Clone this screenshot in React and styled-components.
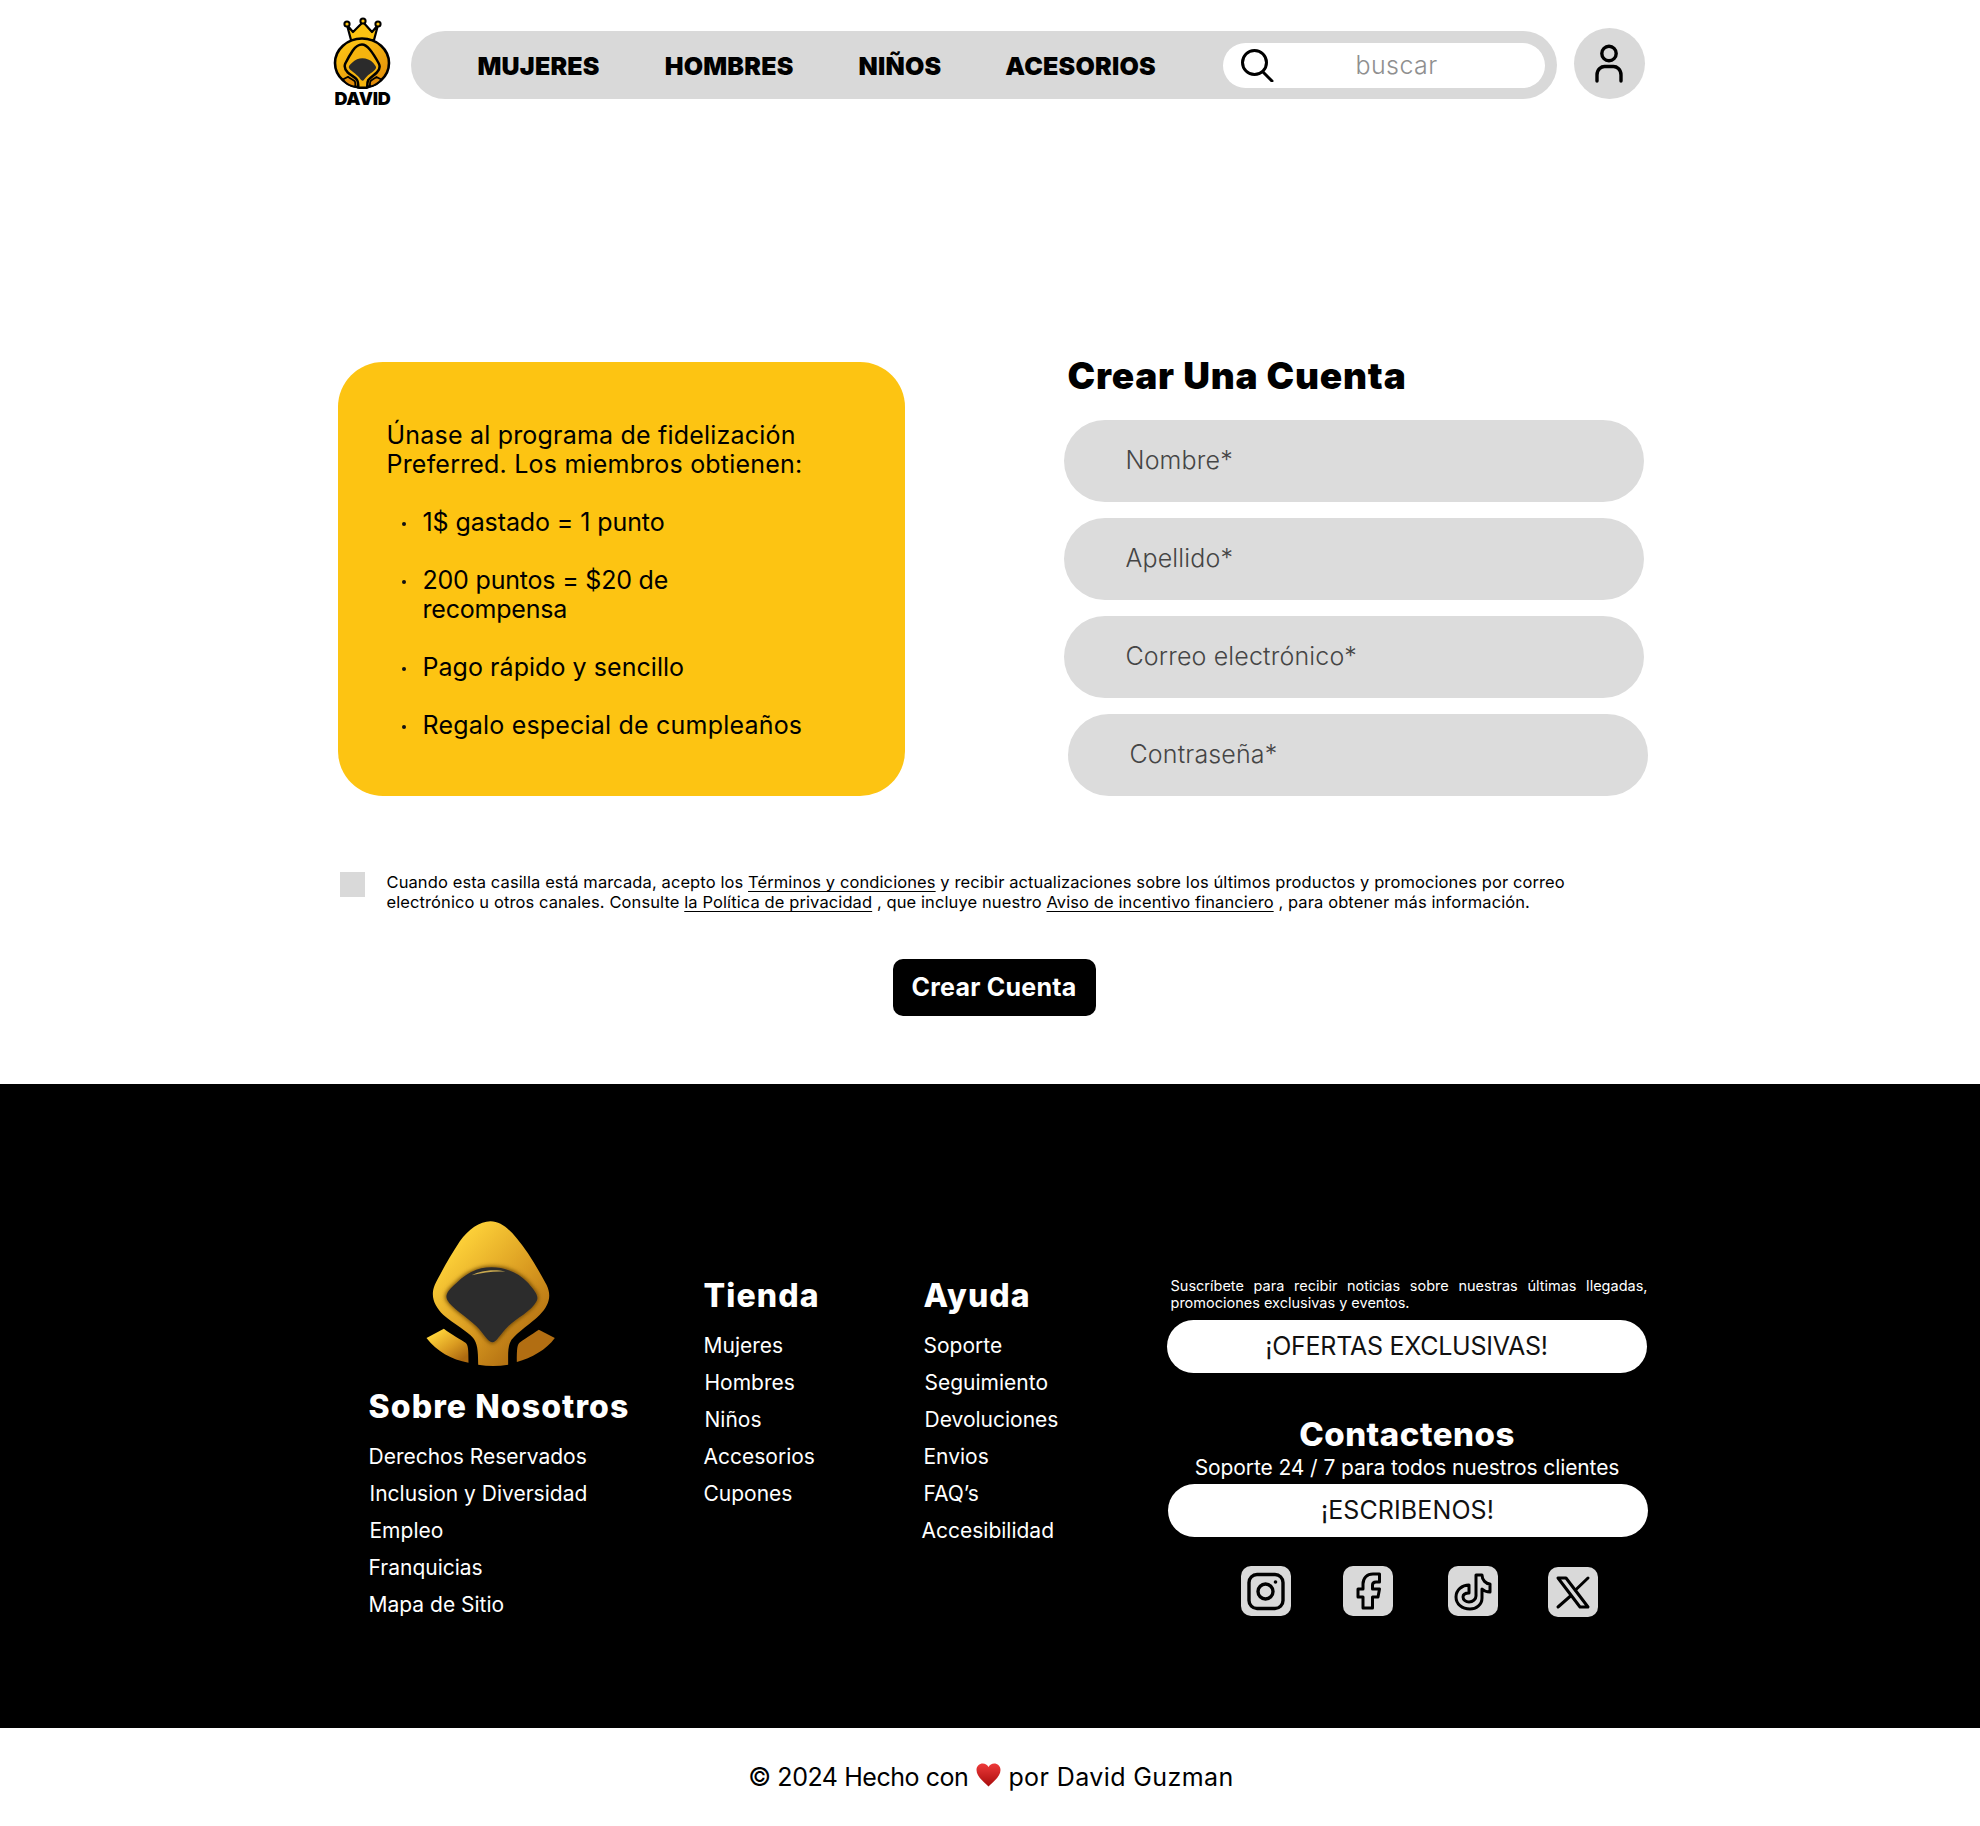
import React from "react";
import styled, { createGlobalStyle } from "styled-components";

const Global = createGlobalStyle`
  html, body { margin: 0; padding: 0; background: #fff; }
  body { font-family: Inter, "Open Sans", sans-serif; color: #000; }
  * { box-sizing: border-box; }
`;
const Shell = styled.div`
  width: 1315px;
  margin: 0 auto;
`;
const Header = styled.header`
  display: flex;
  align-items: flex-start;
  height: 355px;
  padding-top: 17px;
`;
const Brand = styled.div`
  display: flex;
  flex-direction: column;
  align-items: center;
  width: 58px;
  margin-right: 20px;
`;
const BrandName = styled.span`
  font-size: 18px;
  line-height: 17px;
  font-weight: 900;
  letter-spacing: -0.3px;
  margin: 1px 0 0 2px;
`;
const NavPill = styled.nav`
  display: flex;
  align-items: center;
  width: 1146px;
  height: 68px;
  margin-top: 14px;
  padding: 0 12px 0 67px;
  background: #d9d9d9;
  border-radius: 34px;
`;
const NavLink = styled.a`
  font-size: 25px;
  line-height: 68px;
  font-weight: 900;
  letter-spacing: 0.2px;
  margin-right: ${(p) => p.$gap}px;
  padding-top: 2px;
`;
const SearchBox = styled.div`
  display: flex;
  align-items: center;
  width: 322px;
  height: 45px;
  margin-left: auto;
  padding-left: 17px;
  background: #fff;
  border-radius: 23px;
  svg { flex: none; }
`;
const SearchInput = styled.input`
  width: 160px;
  margin-left: 82px;
  border: 0;
  outline: 0;
  padding: 0;
  background: transparent;
  font: 300 25px Inter, sans-serif;
  letter-spacing: 0.4px;
  &::placeholder { color: #8f8f8f; opacity: 1; }
`;
const UserButton = styled.button`
  display: flex;
  align-items: center;
  justify-content: center;
  width: 71px;
  height: 71px;
  margin: 11px 0 0 17px;
  padding: 0;
  border: 0;
  border-radius: 50%;
  background: #d9d9d9;
`;
const Row = styled.section`
  display: flex;
  align-items: flex-start;
  padding-left: 5px;
`;
const Card = styled.aside`
  width: 567px;
  height: 434px;
  margin-top: 7px;
  padding: 59px 40px 0 49px;
  background: #fdc412;
  border-radius: 45px;
  font-size: 25px;
  line-height: 29px;
  font-weight: 400;
`;
const CardLead = styled.p`
  margin: 0 0 29px;
  letter-spacing: 0.2px;
`;
const Perks = styled.ul`
  margin: 0;
  padding: 0;
  list-style: none;
`;
const Perk = styled.li`
  position: relative;
  margin: 0 0 29px;
  padding-left: 36px;
  white-space: pre;
  letter-spacing: ${(p) => p.$track || "0"};
  &::before {
    content: "";
    position: absolute;
    left: 15px;
    top: 14px;
    width: 4px;
    height: 4px;
    border-radius: 50%;
    background: #111;
  }
`;
const FormCol = styled.div`
  display: flex;
  flex-direction: column;
  width: 584px;
  margin-left: 159px;
`;
const FormTitle = styled.h1`
  margin: 0 0 23px 4px;
  font-size: 37px;
  line-height: 42px;
  font-weight: 900;
  letter-spacing: 0.8px;
`;
const Field = styled.input`
  width: 580px;
  height: 82px;
  margin: 0 0 16px ${(p) => p.$shift || 0}px;
  padding: 0 0 2px 62px;
  border: 0;
  outline: 0;
  border-radius: 41px;
  background: #dcdcdc;
  font: 300 25px Inter, sans-serif;
  letter-spacing: 0.15px;
  &::placeholder { color: #454545; opacity: 1; }
`;
const Consent = styled.div`
  display: flex;
  align-items: flex-start;
  margin-top: 60px;
  padding-left: 7px;
`;
const Check = styled.span`
  flex: none;
  width: 25px;
  height: 25px;
  margin-right: 22px;
  background: #d9d9d9;
`;
const ConsentText = styled.p`
  margin: 0;
  font-size: 16.5px;
  line-height: 20px;
  letter-spacing: 0.1px;
  a { text-decoration: underline; text-underline-offset: 3px; text-decoration-thickness: 1px; }
`;
const Submit = styled.button`
  display: block;
  width: 203px;
  height: 57px;
  margin: 47px 0 68px 560px;
  padding: 0 0 2px;
  border: 0;
  border-radius: 10px;
  background: #000;
  color: #fff;
  font: 700 25px Inter, sans-serif;
  letter-spacing: 0.25px;
`;
const Footer = styled.footer`
  height: 644px;
  background: #000;
  color: #fff;
  padding-top: 134px;
`;
const FooterGrid = styled.div`
  display: grid;
  grid-template-columns: 371px 220px 243px 481px;
`;
const About = styled.div`
  padding-left: 36px;
`;
const LinkCol = styled.div`
  padding-top: 56px;
`;
const FooterLogo = styled.svg`
  display: block;
  width: 137px;
  height: 150px;
  margin: 0 0 17px 54px;
`;
const FooterTitle = styled.h3`
  margin: 0 0 9px;
  font-size: 32px;
  line-height: 44px;
  font-weight: 800;
  letter-spacing: 1.1px;
`;
const FooterLink = styled.a`
  display: block;
  margin-left: ${(p) => p.$nudge || 0}px;
  font-size: 21px;
  line-height: 37px;
  font-weight: 400;
`;
const Side = styled.div`
  padding-top: 59px;
`;
const Blurb = styled.p`
  width: 477px;
  margin: 0 0 9px 4px;
  font-size: 14.5px;
  line-height: 17px;
  text-align: justify;
`;
const Pill = styled.a`
  display: block;
  width: 480px;
  height: 53px;
  margin-left: ${(p) => p.$shift || 0}px;
  border-radius: 27px;
  background: #fff;
  color: #111;
  font-size: 25px;
  line-height: 53px;
  font-weight: 400;
  letter-spacing: ${(p) => p.$track || "0"};
  text-align: center;
`;
const ContactTitle = styled.h3`
  margin: 40px 0 0;
  font-size: 33px;
  line-height: 42px;
  font-weight: 800;
  letter-spacing: 0.5px;
  text-align: center;
`;
const ContactText = styled.p`
  margin: 0 0 4px;
  font-size: 21px;
  line-height: 25px;
  letter-spacing: -0.1px;
  text-align: center;
`;
const Socials = styled.div`
  display: flex;
  align-items: flex-start;
  margin: 29px 0 0 74px;
`;
const Tile = styled.a`
  display: block;
  width: 50px;
  height: 50px;
  margin-left: ${(p) => p.$gap || 0}px;
  margin-top: ${(p) => p.$drop || 0}px;
  border-radius: 10px;
  background: #d9d9d9;
  svg { display: block; }
`;
const Bottom = styled.div`
  display: flex;
  align-items: center;
  justify-content: center;
  height: 98px;
  padding-left: 2px;
  font-size: 25px;
  font-weight: 400;
  svg { margin: -4px 7px 0 8px; }
`;
const BottomText = styled.span`
  letter-spacing: ${(p) => p.$track};
`;

const HOOD = "M452 65C420 65 385 90 360 125C330 170 300 225 285 255C270 290 285 320 310 345C340 372 385 395 400 415C412 430 415 450 415 495C445 500 475 500 505 495C505 460 503 440 515 420C535 395 575 370 600 345C630 315 635 285 620 255C590 200 560 150 530 115C505 85 480 65 452 65Z";
const FACE = "M455 203C420 203 385 215 350 250C325 272 315 285 322 300C335 325 380 350 410 380C430 400 445 428 457 428C470 428 480 405 505 380C530 355 575 335 590 305C597 290 590 280 565 250C535 218 495 203 455 203Z";
const SHOULDER_L = "M260 415L312 387C335 405 365 420 378 430C385 437 386 450 386 489C335 480 290 455 260 415Z";
const SHOULDER_R = "M645 415L597 390C575 405 550 420 538 430C532 437 531 450 531 487C575 475 620 450 645 415Z";

const BrandMark = () => (
  <svg width="58" height="72" viewBox="0 0 58 72">
    <defs>
      <linearGradient id="brandGold" x1="0.15" y1="0" x2="0.85" y2="1">
        <stop offset="0" stopColor="#ffc916" />
        <stop offset="1" stopColor="#e08a08" />
      </linearGradient>
    </defs>
    <path d="M14 8L20 15L30 5L39 15L45 8L41 23H18Z" fill="#fdc412" stroke="#000" strokeWidth="2.2" strokeLinejoin="round" />
    <circle cx="14" cy="7" r="2.6" fill="#fdc412" stroke="#000" strokeWidth="2" />
    <circle cx="30" cy="4" r="2.6" fill="#fdc412" stroke="#000" strokeWidth="2" />
    <circle cx="45" cy="7" r="2.6" fill="#fdc412" stroke="#000" strokeWidth="2" />
    <ellipse cx="29" cy="46" rx="27" ry="24.5" fill="url(#brandGold)" stroke="#000" strokeWidth="2.6" />
    <g transform="translate(-16.2 21) scale(0.1)">
      <path d={HOOD} fill="#f6b40e" stroke="#000" strokeWidth="25" />
      <path d={FACE} fill="#2b2b2b" />
      <path d={SHOULDER_L} fill="#e08a08" stroke="#000" strokeWidth="18" />
      <path d={SHOULDER_R} fill="#e08a08" stroke="#000" strokeWidth="18" />
    </g>
  </svg>
);

const FooterMark = () => (
  <FooterLogo viewBox="250 55 410 450">
    <defs>
      <linearGradient id="hoodGold" x1="0.2" y1="0.15" x2="0.85" y2="0.9">
        <stop offset="0" stopColor="#fdd139" />
        <stop offset="0.55" stopColor="#d99a20" />
        <stop offset="1" stopColor="#ad6a10" />
      </linearGradient>
      <filter id="soft" x="-20%" y="-20%" width="140%" height="140%">
        <feGaussianBlur stdDeviation="7" />
      </filter>
    </defs>
    <path d={HOOD} fill="url(#hoodGold)" />
    <path d={FACE} fill="#6b4508" filter="url(#soft)" stroke="#6b4508" strokeWidth="6" />
    <path d={FACE} fill="#2c2c2c" />
    <path d="M395 227C425 212 465 208 497 216C465 214 430 218 395 227Z" fill="#c9a94f" />
    <path d={SHOULDER_L} fill="url(#hoodGold)" />
    <path d={SHOULDER_R} fill="#b26e12" />
  </FooterLogo>
);

const SearchIcon = () => (
  <svg width="34" height="34" viewBox="0 0 34 34" fill="none" stroke="#000" strokeWidth="3" strokeLinecap="round">
    <circle cx="14.5" cy="14.5" r="12" />
    <path d="M23 24L32 33" />
  </svg>
);
const UserIcon = () => (
  <svg width="32" height="40" viewBox="0 0 32 40" fill="none" stroke="#000" strokeWidth="3.4" strokeLinecap="round">
    <circle cx="16" cy="9.5" r="7.2" />
    <path d="M4 37V31C4 25 8.5 22.5 11.5 22.5H20.5C23.5 22.5 28 25 28 31V37" />
  </svg>
);
const Heart = () => (
  <svg width="25" height="24" viewBox="0 0 25 24">
    <defs>
      <linearGradient id="heartRed" x1="0" y1="0" x2="0" y2="1">
        <stop offset="0" stopColor="#ee3a3a" />
        <stop offset="1" stopColor="#a80c0c" />
      </linearGradient>
    </defs>
    <path d="M12.5 23.5C8 19 0.5 13.5 0.5 7C0.5 3 3.5 0.5 6.8 0.5C9.2 0.5 11.3 1.8 12.5 4C13.7 1.8 15.8 0.5 18.2 0.5C21.5 0.5 24.5 3 24.5 7C24.5 13.5 17 19 12.5 23.5Z" fill="url(#heartRed)" />
  </svg>
);
const tileStroke = { fill: "none", stroke: "#000", strokeWidth: 3, strokeLinejoin: "round", strokeLinecap: "round" };
const InstagramIcon = () => (
  <svg width="50" height="50" viewBox="0 0 50 50" {...tileStroke}>
    <rect x="8" y="8.5" width="34" height="34" rx="8" strokeWidth="3.4" />
    <circle cx="24.5" cy="25.5" r="7.5" strokeWidth="3.4" />
    <circle cx="34.5" cy="16" r="1.8" fill="#000" stroke="none" />
  </svg>
);
const FacebookIcon = () => (
  <svg width="50" height="50" viewBox="0 0 50 50" {...tileStroke}>
    <path d="M36.5 8L30 8C24 8 20 12 20 18L20 23L15 23L15 31L20 31L20 42L29.5 42L29.5 31L35 31L36.5 23L29.5 23L29.5 19C29.5 17 31 16 33 16L36.5 16Z" />
  </svg>
);
const TiktokIcon = () => (
  <svg width="50" height="50" viewBox="0 0 50 50" {...tileStroke}>
    <path d="M28 9L34 9C34 14 38 18 42 18L42 26C38 26 36 25 34 23L34 32C34 39 28 43 22 43C14 43 8 38 8 31C8 24 14 19 21 19L21 27C17 27 15 28 15 31C15 34 18 36 21 36C25 36 28 33 28 30Z" />
  </svg>
);
const XIcon = () => (
  <svg width="50" height="50" viewBox="0 0 50 50" {...tileStroke}>
    <path d="M10 11L18 11L40 40L32 40Z" />
    <path d="M40 11L27.5 23M22.5 29L10 40" />
  </svg>
);

const TIENDA = [["Mujeres", 0], ["Hombres", 1], ["Niños", 1], ["Accesorios", 0], ["Cupones", 0]];
const AYUDA = [["Soporte", 0], ["Seguimiento", 1], ["Devoluciones", 1], ["Envios", 0], ["FAQ’s", 0], ["Accesibilidad", -2]];
const SOBRE = [["Derechos Reservados", 0], ["Inclusion y Diversidad", 1], ["Empleo", 1], ["Franquicias", 0], ["Mapa de Sitio", 0]];

export default function App() {
  return (
    <>
      <Global />
      <Shell>
        <Header>
          <Brand>
            <BrandMark />
            <BrandName>DAVID</BrandName>
          </Brand>
          <NavPill>
            <NavLink $gap={65}>MUJERES</NavLink>
            <NavLink $gap={65}>HOMBRES</NavLink>
            <NavLink $gap={64}>NIÑOS</NavLink>
            <NavLink>ACESORIOS</NavLink>
            <SearchBox>
              <SearchIcon />
              <SearchInput placeholder="buscar" />
            </SearchBox>
          </NavPill>
          <UserButton aria-label="cuenta"><UserIcon /></UserButton>
        </Header>
        <Row>
          <Card>
            <CardLead>Únase al programa de fidelización<br />Preferred. Los miembros obtienen:</CardLead>
            <Perks>
              <Perk $track="-0.1px">1$ gastado = 1 punto</Perk>
              <Perk $track="-0.2px">{"200 puntos = $20 de\nrecompensa"}</Perk>
              <Perk $track="0.05px">Pago rápido y sencillo</Perk>
              <Perk $track="0.2px">Regalo especial de cumpleaños</Perk>
            </Perks>
          </Card>
          <FormCol>
            <FormTitle>Crear Una Cuenta</FormTitle>
            <Field placeholder="Nombre*" />
            <Field placeholder="Apellido*" />
            <Field placeholder="Correo electrónico*" />
            <Field $shift={4} placeholder="Contraseña*" />
          </FormCol>
        </Row>
        <Consent>
          <Check />
          <ConsentText>
            Cuando esta casilla está marcada, acepto los <a>Términos y condiciones</a> y recibir actualizaciones sobre los últimos productos y promociones por correo<br />
            electrónico u otros canales. Consulte <a>la Política de privacidad</a> , que incluye nuestro <a>Aviso de incentivo financiero</a> , para obtener más información.
          </ConsentText>
        </Consent>
        <Submit>Crear Cuenta</Submit>
      </Shell>
      <Footer>
        <Shell>
          <FooterGrid>
            <About>
              <FooterMark />
              <FooterTitle>Sobre Nosotros</FooterTitle>
              {SOBRE.map(([t, n]) => <FooterLink key={t} $nudge={n}>{t}</FooterLink>)}
            </About>
            <LinkCol>
              <FooterTitle>Tienda</FooterTitle>
              {TIENDA.map(([t, n]) => <FooterLink key={t} $nudge={n}>{t}</FooterLink>)}
            </LinkCol>
            <LinkCol>
              <FooterTitle>Ayuda</FooterTitle>
              {AYUDA.map(([t, n]) => <FooterLink key={t} $nudge={n}>{t}</FooterLink>)}
            </LinkCol>
            <Side>
              <Blurb>Suscríbete para recibir noticias sobre nuestras últimas llegadas, promociones exclusivas y eventos.</Blurb>
              <Pill $track="-0.25px">¡OFERTAS EXCLUSIVAS!</Pill>
              <ContactTitle>Contactenos</ContactTitle>
              <ContactText>Soporte 24 / 7 para todos nuestros clientes</ContactText>
              <Pill $shift={1} $track="0.1px">¡ESCRIBENOS!</Pill>
              <Socials>
                <Tile><InstagramIcon /></Tile>
                <Tile $gap={52}><FacebookIcon /></Tile>
                <Tile $gap={55}><TiktokIcon /></Tile>
                <Tile $gap={50} $drop={1}><XIcon /></Tile>
              </Socials>
            </Side>
          </FooterGrid>
        </Shell>
      </Footer>
      <Bottom>
        <BottomText $track="-0.45px">© 2024 Hecho con</BottomText>
        <Heart />
        <BottomText $track="0.4px">por David Guzman</BottomText>
      </Bottom>
    </>
  );
}
